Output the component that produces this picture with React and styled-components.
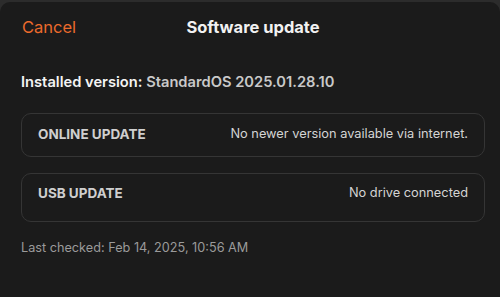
import React from "react";
import styled, { createGlobalStyle } from "styled-components";

const GlobalStyle = createGlobalStyle`
  html, body {
    margin: 0;
    padding: 0;
    background: #2c2c2c;
  }
  body {
    font-family: Inter, "Noto Sans", sans-serif;
    -webkit-font-smoothing: antialiased;
  }
`;

const Sheet = styled.div`
  margin-top: 2px;
  height: 295px;
  background: #1b1b1b;
  border-radius: 10px 10px 0 0;
  padding: 0 15px 0 21px;
  box-sizing: border-box;
`;

const Header = styled.div`
  display: grid;
  grid-template-columns: 1fr auto 1fr;
  align-items: center;
  height: 50px;
`;

const CancelButton = styled.button`
  justify-self: start;
  background: none;
  border: none;
  padding: 0 0 0 1px;
  font-family: inherit;
  font-size: 16.5px;
  color: #ec6a2c;
  cursor: pointer;
`;

const Title = styled.div`
  font-size: 16.5px;
  font-weight: 700;
  color: #f2f2f2;
`;

const Installed = styled.div`
  margin-top: 21px;
  font-size: 14.7px;
  line-height: 18px;
  font-weight: 600;
  color: #f4f4f4;
`;

const Version = styled.span`
  color: #c9c9c9;
`;

const Cards = styled.div`
  display: flex;
  flex-direction: column;
  gap: 16px;
  margin-top: 22px;
`;

const Card = styled.div`
  display: flex;
  justify-content: space-between;
  align-items: flex-start;
  border: 1px solid #353535;
  border-radius: 10px;
  padding: ${(p) => (p.$tall ? "11px 16px 20px" : "12px 16px 14px")};
  line-height: 16px;
  color: #d4d4d4;
`;

const CardLabel = styled.div`
  font-size: 13.5px;
  font-weight: 700;
  color: #cfcfcf;
`;

const CardStatus = styled.div`
  font-size: 12.8px;
`;

const LastChecked = styled.div`
  margin-top: 18px;
  font-size: 12.7px;
  line-height: 16px;
  color: #9a9a9a;
`;

export default function App() {
  return (
    <>
      <GlobalStyle />
      <Sheet>
        <Header>
          <CancelButton>Cancel</CancelButton>
          <Title>Software update</Title>
          <span />
        </Header>
        <Installed>
          Installed version: <Version>StandardOS 2025.01.28.10</Version>
        </Installed>
        <Cards>
          <Card>
            <CardLabel>ONLINE UPDATE</CardLabel>
            <CardStatus>No newer version available via internet.</CardStatus>
          </Card>
          <Card $tall>
            <CardLabel>USB UPDATE</CardLabel>
            <CardStatus>No drive connected</CardStatus>
          </Card>
        </Cards>
        <LastChecked>Last checked: Feb 14, 2025, 10:56 AM</LastChecked>
      </Sheet>
    </>
  );
}
